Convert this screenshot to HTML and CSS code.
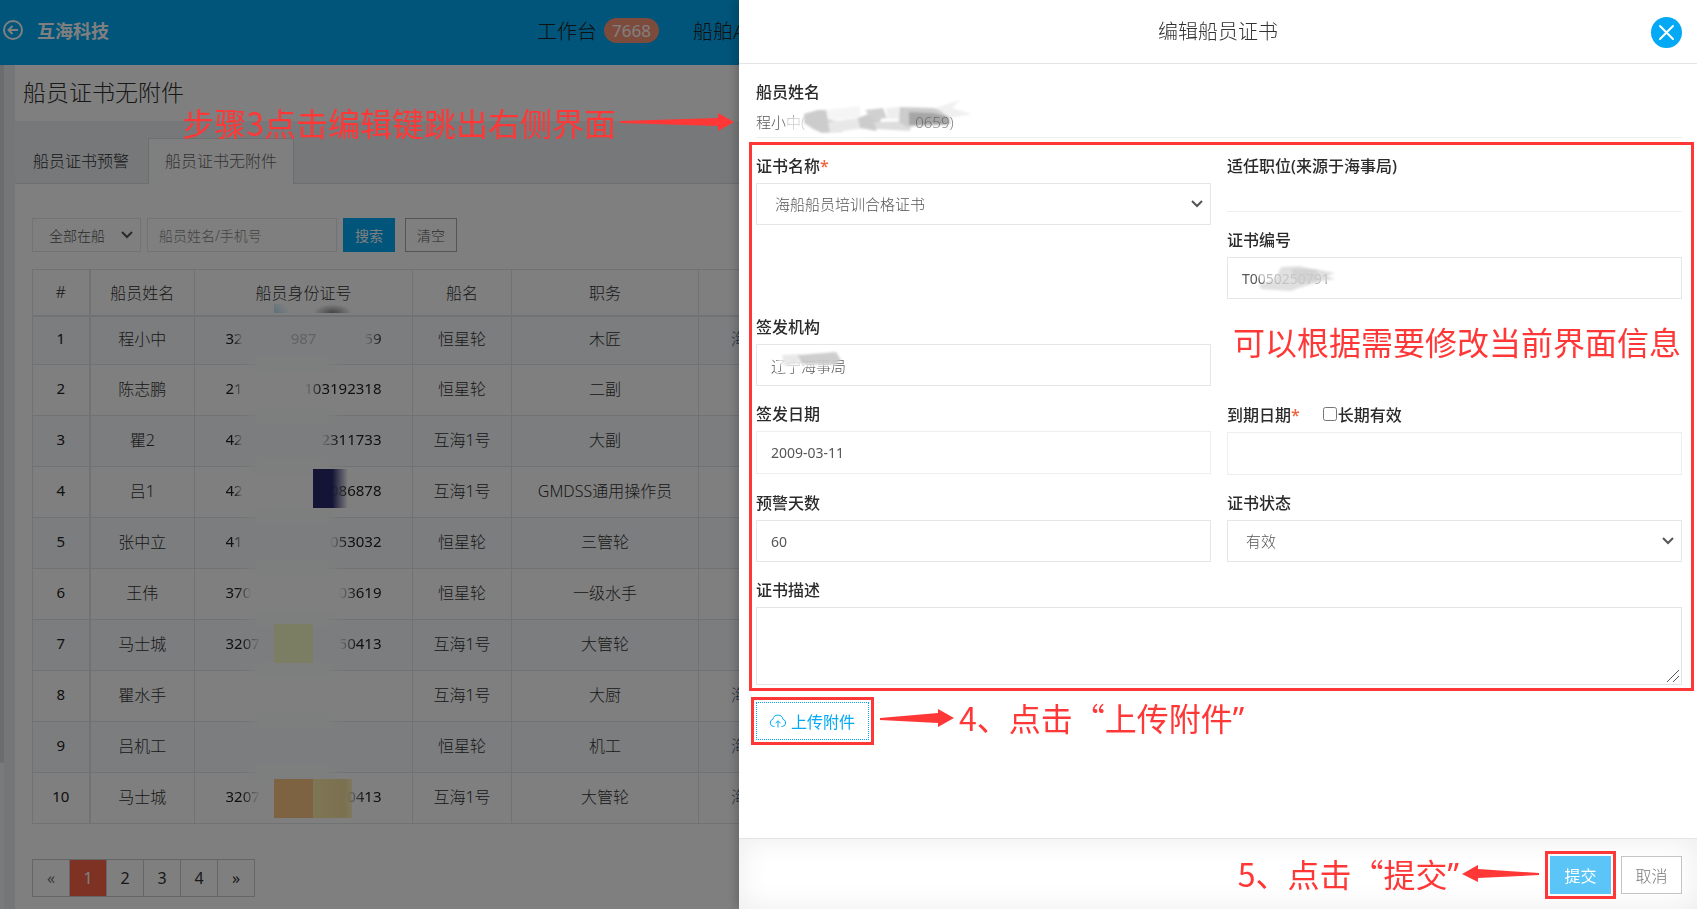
FILE: index.html
```html
<!DOCTYPE html>
<html lang="zh-CN">
<head>
<meta charset="utf-8">
<title>编辑船员证书</title>
<link rel="stylesheet" href="styles.css">
</head>
<body>
<div class="page">
  <header class="topbar">
    <svg class="back" viewBox="0 0 20 20" width="20" height="20"><circle cx="10" cy="10" r="9"/><path d="M15 10H6M9.500 6L5.500 10l4 4"/></svg>
    <span class="brand">互海科技</span>
    <nav class="nav">
      <a href="#" class="nav-item">工作台<span class="badge">7668</span></a>
      <a href="#" class="nav-item">船舶A</a>
    </nav>
  </header>
  <div class="shell">
    <div class="side"><div class="side-thumb"></div></div>
    <main class="content">
      <h1 class="page-title">船员证书无附件</h1>
      <div class="tabs">
        <a href="#" class="tab">船员证书预警</a>
        <a href="#" class="tab active">船员证书无附件</a>
      </div>
      <section class="panel">
        <form class="filters">
          <span class="select small">
            <select aria-label="在船状态"><option>全部在船</option></select>
            <svg viewBox="0 0 14 10" width="14" height="10"><path d="M2 2l5 5 5-5"/></svg>
          </span>
          <input class="search" type="text" placeholder="船员姓名/手机号" aria-label="船员姓名/手机号">
          <button type="button" class="btn primary">搜索</button>
          <button type="button" class="btn plain">清空</button>
        </form>
        <table class="crew">
          <colgroup><col class="c-no"><col class="c-name"><col class="c-id"><col class="c-ship"><col class="c-job"><col class="c-cert"></colgroup>
          <thead><tr><th>#</th><th>船员姓名</th><th>船员身份证号<i class="chip sky"></i><i class="chip ash"></i></th><th>船名</th><th>职务</th><th></th></tr></thead>
          <tbody>
            <tr><td>1</td><td>程小中</td><td class="idc"><span class="id"><b class="fr">32</b><b class="mid">987</b><b class="fl">59</b></span></td><td>恒星轮</td><td>木匠</td><td class="cert"><a href="#">海</a></td></tr>
            <tr><td>2</td><td>陈志鹏</td><td class="idc"><span class="id"><b class="fr">21</b><b class="fl">103192318</b></span></td><td>恒星轮</td><td>二副</td><td></td></tr>
            <tr><td>3</td><td>瞿2</td><td class="idc"><span class="id"><b class="fr">42</b><b class="fl">2311733</b></span></td><td>互海1号</td><td>大副</td><td></td></tr>
            <tr><td>4</td><td>吕1</td><td class="idc"><i class="chip navy"></i><span class="id"><b class="fr">42</b><b class="fl">086878</b></span></td><td>互海1号</td><td>GMDSS通用操作员</td><td></td></tr>
            <tr><td>5</td><td>张中立</td><td class="idc"><span class="id"><b class="fr">41</b><b class="fl">053032</b></span></td><td>恒星轮</td><td>三管轮</td><td></td></tr>
            <tr><td>6</td><td>王伟</td><td class="idc"><span class="id"><b class="fr">370</b><b class="fl">03619</b></span></td><td>恒星轮</td><td>一级水手</td><td></td></tr>
            <tr><td>7</td><td>马士城</td><td class="idc"><i class="chip lime"></i><span class="id"><b class="fr">3207</b><b class="fl">50413</b></span></td><td>互海1号</td><td>大管轮</td><td></td></tr>
            <tr><td>8</td><td>瞿水手</td><td class="idc"></td><td>互海1号</td><td>大厨</td><td class="cert"><a href="#">海</a></td></tr>
            <tr><td>9</td><td>吕机工</td><td class="idc"></td><td>恒星轮</td><td>机工</td><td class="cert"><a href="#">海</a></td></tr>
            <tr><td>10</td><td>马士城</td><td class="idc"><i class="chip orange"></i><i class="chip sand"></i><span class="id"><b class="fr">3207</b><b class="fl">0413</b></span></td><td>互海1号</td><td>大管轮</td><td class="cert"><a href="#">海</a></td></tr>
          </tbody>
        </table>
        <nav class="pager">
          <a href="#" class="muted">«</a><a href="#" class="current">1</a><a href="#">2</a><a href="#">3</a><a href="#">4</a><a href="#">»</a>
        </nav>
      </section>
    </main>
  </div>
</div>
<div class="mask"></div>

<aside class="drawer">
  <header class="drawer-head">
    <h2>编辑船员证书</h2>
    <button type="button" class="close" aria-label="关闭"><svg viewBox="0 0 31 31" width="31" height="31"><path d="M9 9l13 13M22 9L9 22"/></svg></button>
  </header>
  <form class="drawer-body">
    <div class="field">
      <span class="label">船员姓名</span>
      <div class="static">程小中(<span class="tail">0659)</span>
        <svg class="smudge s-name" viewBox="0 0 210 48" width="210" height="48">
          <defs><filter id="soft" x="-10%" y="-10%" width="120%" height="120%"><feGaussianBlur stdDeviation="1"/></filter></defs>
          <g filter="url(#soft)">
            <path d="M22 18l38-8 100-6 40-2-12 14 20 2-30 10-26 8-90 2-40-6z" fill="#fff" opacity=".7"/>
            <path d="M40 14l14-4h12v10l14 2-2 10-20 1-9-4-9-6z" fill="#ccc"/>
            <path d="M64 22l32-4 4 10-34 5z" fill="#e8e8e8"/>
            <path d="M62 10l34-4v12l-32 2z" fill="#f5f5f5"/>
            <path d="M94 18l10-4 14 0-2 8-4 9-16-3z" fill="#ccc"/>
            <path d="M101 10l18-2 4 10-14 2z" fill="#d0d0d0"/>
            <path d="M110 22l38-1-2 10-34-2z" fill="#ddd"/>
            <path d="M122 8l14-1v12h-12z" fill="#eee"/>
            <path d="M136 7l34 1 14 5 3 11-44 3-8-5z" fill="#ccc"/>
            <path d="M145 12l24 1 16 4-2 8-38 0z" fill="#a6a6a6"/>
            <path d="M172 8l24-8-8 8 20 6-22 4z" fill="#f0f0f0"/>
          </g>
        </svg>
      </div>
    </div>
    <div class="fields">
      <div class="frame"></div>
      <div class="field">
        <label for="cert">证书名称<em>*</em></label>
        <span class="select">
          <select id="cert"><option>海船船员培训合格证书</option></select>
          <svg viewBox="0 0 14 10" width="14" height="10"><path d="M2 2l5 5 5-5"/></svg>
        </span>
      </div>
      <div class="stack">
        <div class="field">
          <span class="label">适任职位(来源于海事局)</span>
          <div class="static"></div>
        </div>
        <div class="field">
          <label for="no">证书编号</label>
          <div class="control"><input id="no" class="latin" type="text" value="T0050250791">
            <svg class="smudge s-no" viewBox="0 0 100 36" width="100" height="36"><g filter="url(#soft)">
              <path d="M10 8l40-4 34 6 16 4-12 8-26 6-40-8z" fill="#fff" opacity=".6"/>
              <path d="M18 24l16-6 6-12 18-1 18 4 2 12-20 6-8 3-30-2z" fill="#ccc" opacity=".6"/>
              <path d="M50 8l24 0 20 4-8 3 8 3-12 2-26 2z" fill="#ccc" opacity=".6"/>
            </g></svg>
          </div>
        </div>
      </div>
      <div class="field">
        <label for="org">签发机构</label>
        <div class="control"><input id="org" type="text" value="辽宁海事局">
          <svg class="smudge s-org" viewBox="0 0 80 24" width="80" height="24"><g filter="url(#soft)">
            <path d="M4 4l54-2 12 4-4 10-54 2z" fill="#fff" opacity=".7"/>
            <path d="M12 5l18-1-2 10-14 2z" fill="#e4e4e4" opacity=".8"/>
            <path d="M28 5l38-3 5 8-6 5-34-1z" fill="#c2c2c2" opacity=".8"/>
          </g></svg>
        </div>
      </div>
      <div></div>
      <div class="field">
        <label for="issued">签发日期</label>
        <input id="issued" class="latin tall" type="text" value="2009-03-11">
      </div>
      <div class="field">
        <div class="label-row"><label for="expires">到期日期<em>*</em></label><label class="check"><input type="checkbox">长期有效</label></div>
        <input id="expires" class="latin tall" type="text">
      </div>
      <div class="field">
        <label for="days">预警天数</label>
        <input id="days" class="latin" type="text" value="60">
      </div>
      <div class="field">
        <label for="state">证书状态</label>
        <span class="select">
          <select id="state"><option>有效</option></select>
          <svg viewBox="0 0 14 10" width="14" height="10"><path d="M2 2l5 5 5-5"/></svg>
        </span>
      </div>
      <div class="field wide">
        <label for="desc">证书描述</label>
        <div class="control">
          <textarea id="desc"></textarea>
          <svg class="grip" viewBox="0 0 14 14" width="14" height="14"><path d="M1 13L13 1M7 13l6-6"/></svg>
        </div>
      </div>
    </div>
    <button type="button" class="upload">
      <svg viewBox="0 0 18 16" width="18" height="16"><path d="M5.500 13.500H4.500A3.700 3.700 0 0 1 3.800 6.300 5.200 5.200 0 0 1 14 6.300 3.700 3.700 0 0 1 13.500 13.500h-1M9 14.500V8M6.500 10.300L9 7.800l2.500 2.500"/></svg>
      上传附件
    </button>
  </form>
  <footer class="drawer-foot">
    <button type="button" class="act submit">提交</button>
    <button type="button" class="act cancel">取消</button>
  </footer>
</aside>

<p class="note n1">步骤3点击编辑键跳出右侧界面<svg viewBox="0 0 114 18" width="114" height="18"><path d="M0 8L98 5V0l16 9-16 9v-5L0 10z"/></svg></p>
<p class="note n2">可以根据需要修改当前界面信息</p>
<p class="note n3"><svg viewBox="0 0 74 18" width="74" height="18"><path d="M0 9L58 4V0l16 9-16 9v-4L0 11z"/></svg><span>4、点击“上传附件<span class="quote">”</span></span></p>
<p class="note n4"><span>5、点击“提交<span class="quote">”</span></span><svg viewBox="0 0 77 18" width="77" height="18"><path d="M77 8L16 4V0L0 9l16 8v-4l61-3z"/></svg></p>
</body>
</html>
```
FILE: styles.css
```css
* { box-sizing: border-box; }
body {
  margin: 0;
  min-height: 100vh;
  overflow: hidden;
  font-family: "Noto Sans", "Noto Sans CJK SC", sans-serif;
  font-size: 16px;
  font-weight: 300;
  color: #313131;
  background: #fff;
}
a { color: inherit; text-decoration: none; }
button, input, select, textarea { font: inherit; color: inherit; margin: 0; border-radius: 0; outline: 0; }
h1, h2, p { margin: 0; font-weight: 300; }

/* page behind the drawer */
.page { isolation: isolate; display: flex; flex-direction: column; min-height: 100vh; }
.topbar { display: flex; align-items: center; height: 65px; padding: 0 4px 5px 3px; background: #03a9f4; color: #fff; }
.back { fill: none; stroke: #fff; stroke-width: 2; }
.brand { margin-left: 14px; font-size: 18px; font-weight: 700; }
.nav { display: flex; gap: 34px; margin-left: 428px; color: #222; font-size: 20px; }
.nav-item { display: flex; align-items: center; gap: 7px; white-space: nowrap; }
.badge { padding: 0 8px; border-radius: 13px; background: #fb9678; color: #fff; font-size: 17px; line-height: 25px; font-weight: 400; }
.shell { display: flex; flex: 1; }
.side { flex: 0 0 15px; background: linear-gradient(90deg, #f4f4f4 4px, #e8edf0 4px); }
.side-thumb { width: 4px; height: 698px; background: #d5d8da; border-radius: 0 0 3px 3px; }
.content { flex: 1; min-width: 0; }
.page-title { padding-left: 8px; font-size: 23px; line-height: 54px; height: 56px; }
.tabs { display: flex; height: 63px; padding-top: 17px; background: #edf1f5; border-bottom: 1px solid #d8dcdf; }
.tab { height: 46px; padding: 0 19px 0 18px; line-height: 47px; }
.tab.active { padding: 0 16px; background: #fff; border: 1px solid #d8dcdf; border-bottom: 0; color: #666; line-height: 45px; }
.panel { padding: 34px 17px 12px; }
.filters { display: flex; height: 34px; margin-bottom: 17px; font-size: 14px; color: #565656; }
.select { position: relative; display: block; }
.select select { appearance: none; width: 100%; height: 42px; padding: 0 40px 0 18px; border: 1px solid #e4e7ea; background: #fff; }
.select svg { position: absolute; right: 7px; top: 50%; margin-top: -5px; fill: none; stroke: #555; stroke-width: 2; pointer-events: none; }
.select.small { width: 109px; margin-right: 6px; }
.select.small select { height: 34px; padding: 0 20px 0 16px; }
.search { width: 190px; padding: 0 11px; border: 1px solid #e4e7ea; background: #fff; }
.search::placeholder { color: #888; }
.btn { width: 52px; margin-left: 6px; padding: 0; border: 1px solid #aaa; background: #fff; }
.btn.primary { border-color: #03a9f4; background: #03a9f4; color: #fff; font-weight: 400; }
.btn.plain { margin-left: 10px; }

.crew { table-layout: fixed; width: 892px; border-collapse: collapse; text-align: center; color: #333; }
.c-no { width: 57px; } .c-name { width: 105px; } .c-id { width: 218px; }
.c-ship { width: 99px; } .c-job { width: 187px; } .c-cert { width: 226px; }
.crew th, .crew td { position: relative; height: 51px; padding: 0 0 5px; border: 1px solid #e0e4e7; font-weight: 300; }
.crew th { height: 46px; padding: 0; border-bottom-width: 2px; }
.crew tbody tr:first-child td { height: 49px; }
.crew th:first-child, .crew td:first-child { border-right-width: 2px; }
.crew td:first-child { font-size: 15px; font-weight: 400; color: #222; }
.crew tbody tr:nth-child(odd) { background: #f7fafc; }
.crew td.cert { padding-left: 32px; text-align: left; }
.crew a { color: #468; }
.id { position: relative; z-index: 2; display: inline-flex; justify-content: space-between; width: 156px; font-size: 15px; color: #222; }
.id b { font-weight: 400; }
.fr { mask-image: linear-gradient(90deg, #000 45%, transparent); }
.fl { mask-image: linear-gradient(90deg, transparent, #000 18px); }
.mid { opacity: .25; }
.idc::after { content: ""; position: absolute; z-index: 1; left: 45px; bottom: -8px; width: 105px; height: 16px; background: linear-gradient(90deg, transparent, #fbfcfd 20%, #fbfcfd 80%, transparent); }
.crew tbody tr:last-child .idc::after { display: none; }
.chip { position: absolute; z-index: 2; top: 6px; left: 79px; width: 39px; height: 39px; }
.navy { left: 118px; width: 35px; top: 2px; background: linear-gradient(90deg, #29286c 55%, transparent); }
.lime { top: 4px; background: #f9fdc8; }
.orange { background: #fdc787; }
.sand { left: 118px; background: linear-gradient(90deg, #fdecab, #f6e2a0 80%, #fff1c0); }
.chip.sky, .chip.ash { top: auto; bottom: 2px; height: 9px; }
.chip.sky { width: 18px; background: linear-gradient(45deg, #b5e2f5, transparent 70%); }
.chip.ash { left: 118px; background: radial-gradient(ellipse at bottom, #888, transparent 70%); }

.pager { display: inline-flex; margin-top: 35px; border: 1px solid #ccc; font-weight: 400; }
.pager a { width: 37px; line-height: 36px; text-align: center; }
.pager a:first-child { width: 36px; }
.pager a + a { border-left: 1px solid #ccc; }
.pager .current { background: #fb6446; color: #fff; }
.pager .muted { color: #777; }

.mask { position: fixed; inset: 0; background: rgba(0, 0, 0, .5); }

/* drawer */
.drawer { position: fixed; top: 0; right: 0; bottom: 0; width: 56.45%; display: flex; flex-direction: column; background: #fff; box-shadow: 0 0 12px rgba(0, 0, 0, .3); }
.drawer-head { position: relative; border-bottom: 1px solid #e2e4e6; text-align: center; }
.drawer-head h2 { font-size: 20px; line-height: 63px; }
.close { position: absolute; top: 17px; right: 15px; width: 31px; height: 31px; padding: 0; border: 0; border-radius: 50%; background: #03a9f4; }
.close svg { display: block; fill: none; stroke: #fff; stroke-width: 2; stroke-linecap: round; }
.drawer-body { flex: 1; padding: 16px 15px 0 17px; color: #565656; font-size: 15px; }
.field { margin-bottom: 16px; }
.field label, .label { display: block; margin-bottom: 5px; color: #2b2b2b; font-size: 16px; line-height: 24px; font-weight: 500; }
.label { margin-bottom: 0; }
.field em { color: #f0643c; font-style: normal; }
.label-row { display: flex; gap: 23px; padding-top: 1px; }
.field .check { display: flex; align-items: center; }
.check input { width: 14px; height: 14px; margin: 0 1px 2px 0; }
.static { position: relative; height: 34px; border-bottom: 1px solid #eceeef; line-height: 36px; }
.tail { position: relative; z-index: 1; margin-left: 110px; opacity: .7; }
.fields { position: relative; display: grid; grid-template-columns: 1fr 1fr; column-gap: 16px; }
.frame { position: absolute; inset: -12px -12px 10px -7px; border: 3px solid #ff3737; pointer-events: none; }
.wide { grid-column: 1 / -1; }
.control { position: relative; }
.field input[type="text"] { display: block; width: 100%; height: 42px; padding: 0 14px; border: 1px solid #e4e7ea; background: #fff; }
.field input.latin { font-size: 14px; font-weight: 400; }
.field input.tall { height: 43px; border-color: #eceeef; }
.field textarea { display: block; width: 100%; height: 78px; padding: 8px 14px; border: 1px solid #e2e4e6; resize: none; }
.grip { position: absolute; right: 2px; bottom: 2px; fill: none; stroke: #555; }
.smudge { position: absolute; pointer-events: none; }
.s-name { left: 8px; top: -4px; }
.s-no { left: 14px; top: 4px; }
.s-org { left: 14px; top: 6px; }
.upload { display: flex; align-items: center; gap: 4px; height: 38px; margin-top: 1px; padding: 0 13px 0 12px; border: 1px dotted #03a9f4; background: #fff; color: #03a9f4; font-size: 16px; font-weight: 400; outline: 3px solid #ff3737; outline-offset: 2px; }
.upload svg { fill: none; stroke: #03a9f4; }
.drawer-foot { display: flex; justify-content: flex-end; gap: 10px; height: 71px; padding: 17px 15px; border-top: 1px solid #e2e4e6; box-shadow: inset 0 0 30px rgba(0, 0, 0, .08); }
.act { width: 61px; height: 38px; padding: 0; border: 1px solid #c4c4c4; background: #fff; color: #777; }
.submit { border-color: #5bc5f7; background: #5bc5f7; color: #fff; font-weight: 400; outline: 3px solid #ff3737; outline-offset: 2px; }

/* walkthrough annotations */
.note { position: fixed; display: flex; align-items: center; color: #ff3737; font-family: "Noto Sans CJK SC", sans-serif; font-size: 32px; line-height: 40px; font-weight: 400; white-space: nowrap; }
.note svg { fill: #ff3737; }
.quote { font-family: "Noto Sans", sans-serif; }
.n1 { right: 963px; top: 102px; gap: 4px; }
.n2 { right: 16px; top: 321px; }
.n3 { left: 880px; top: 697px; gap: 5px; }
.n4 { right: 158px; top: 853px; gap: 3px; }
```
